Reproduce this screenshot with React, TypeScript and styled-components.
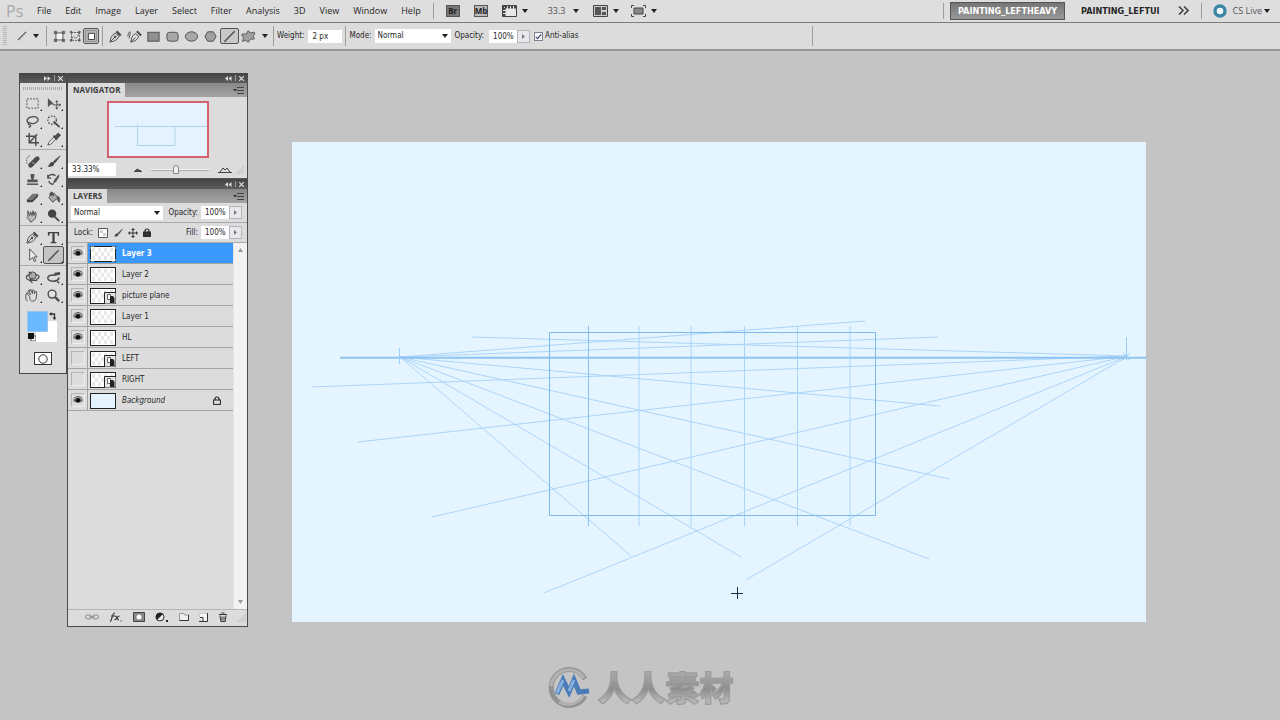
import React, { useState } from 'react';
import styled, { createGlobalStyle, css } from 'styled-components';

const ui = '"DejaVu Sans Condensed", "DejaVu Sans", "Noto Sans", sans-serif';
const menuFont = '"Open Sans", "Noto Sans", sans-serif';

const GlobalStyle = createGlobalStyle`
  *, *::before, *::after { box-sizing: border-box; }
  body { margin: 0; background: #c4c4c4; color: #262626; font: 8px/12px ${ui}; }
  button, input, select { font: inherit; color: inherit; margin: 0; }
  button { background: none; border: 0; padding: 0; cursor: default; }
  svg { display: block; flex: none; }
`;

const Page = styled.div`
  display: flex;
  flex-direction: column;
  min-height: 100vh;
`;

/* ---------- shared controls ---------- */

const Divider = styled.span<{ $h?: number; $before?: number; $after?: number }>`
  flex: none;
  width: 1px;
  height: ${p => p.$h ?? 20}px;
  margin: 0 ${p => p.$after ?? 0}px 0 ${p => p.$before ?? 0}px;
  background: #9c9c9c;
`;

const Caret = ({ w = 6, c = '#222' }: { w?: number; c?: string }) => (
  <svg width={w} height="4" viewBox="0 0 6 4" aria-hidden="true"><path d="M0 0h6L3 4z" fill={c} /></svg>
);

const Field = styled.input<{ $w: number }>`
  width: ${p => p.$w}px;
  height: 13px;
  padding: 0 0 0 4px;
  border: 0;
  outline: 0;
  background: #fff;
  line-height: 13px;
`;

const SelectBox = styled.span<{ $w: number }>`
  display: grid;
  grid-template-columns: 1fr 12px;
  align-items: center;
  width: ${p => p.$w}px;
  height: 14px;
  background: #fff;
  select {
    grid-area: 1 / 1 / 2 / 3;
    width: 100%;
    height: 14px;
    padding: 0 0 0 3px;
    border: 0;
    appearance: none;
    background: none;
  }
  svg { grid-area: 1 / 2; justify-self: center; pointer-events: none; }
`;

const Flyout = styled.button`
  display: grid;
  place-items: center;
  width: 13px;
  height: 13px;
  border: 1px solid #b4b4bc;
  background: #e8e8ec;
`;

const FlyoutArrow = () => (
  <svg width="3" height="5" viewBox="0 0 3 5" aria-hidden="true"><path d="M0 0l3 2.5L0 5z" fill="#778" /></svg>
);

const Percent = ({ label, id }: { label: string; id: string }) => (
  <>
    <label htmlFor={id}>{label}</label>
    <Group>
      <Field id={id} $w={28} defaultValue="100%" />
      <Flyout aria-label={`${label} slider`}><FlyoutArrow /></Flyout>
    </Group>
  </>
);

const Group = styled.div<{ $gap?: number; $ml?: number }>`
  display: flex;
  align-items: center;
  gap: ${p => p.$gap ?? 0}px;
  margin-left: ${p => p.$ml ?? 0}px;
`;

/* ---------- icons ---------- */

const art: Record<string, React.ReactNode> = {
  marquee: <rect x="2" y="3" width="12" height="10" fill="none" strokeDasharray="2 1.4" />,
  move: <><path d="M2 2v10l3-3h4z" fill="#555" stroke="none" /><path d="M11.500 5.500v8M7.500 9.500h8M10.300 6.500l1.200-1.500 1.200 1.500M10.300 12.500l1.200 1.500 1.200-1.500M14 8.300l1.500 1.200L14 10.700" /></>,
  lasso: <path d="M4.500 10C1 8.500 1.500 4 7 3s8 2 6.500 4.500S8 11 5 9.500c-2-1-2 2 0 2s1 2-1 3" fill="none" strokeWidth="1.400" />,
  wand: <><circle cx="6.500" cy="6.500" r="4.500" fill="none" strokeDasharray="1.600 1.600" strokeWidth="1.500" /><path d="M8 8l6.500 6" strokeWidth="2" /></>,
  crop: <path d="M4.500 1v10.500H15M1 4.500h10.500V15M4.500 11.500l8.500-9" fill="none" strokeWidth="1.500" />,
  dropper: <><path d="M2 14l1-3 5.500-5.500 2 2L5 13z" fill="#eee" /><path d="M8 4l4 4M9.500 5.500L13 2l1.500 1.500-3.500 3.500z" strokeWidth="2" /></>,
  heal: <><path d="M5 2C1 3 1 9 3 11" fill="none" strokeDasharray="1.500 1.200" /><path d="M6 12l7-7" strokeWidth="5" strokeLinecap="round" /><path d="M8 8.500l2 2" stroke="#ccc" strokeWidth="1" /></>,
  brush: <><path d="M15 2L8 8l1.500 1.500z" fill="#555" /><path d="M1.500 13c2 0 2-4 5-4.500 2-.300 3 1.500 2 3-1.500 2.300-5 2.500-7 1.500z" fill="#444" stroke="none" /></>,
  stamp: <><path d="M6 2h4v3L9 8h4.500v3h-11V8H7L6 5z" fill="#555" stroke="none" /><path d="M2 13h12" strokeWidth="1.500" /></>,
  history: <><path d="M14 2L9 8l-2 5 4-3 3-5z" fill="#555" stroke="none" /><path d="M2 6c1-4 6-4 8-2M2 3v3.500h3.500M3 9.500c1 3 2 3.500 5 3.500" fill="none" strokeWidth="1.500" /></>,
  eraser: <><path d="M2 10l6-6h6l-6 6z" fill="#777" stroke="none" /><path d="M2 10h6l6-6v3l-6 6H2z" fill="#444" stroke="none" /></>,
  bucket: <><path d="M3 8l5-5 5 5-6 5z" fill="#aaa" /><path d="M4 6c0-5 4-5 4 0M12 7c3 0 3 4 2 6-1.500-1-1.500-3-2-6z" fill="#555" /></>,
  smudge: <path d="M3 3l2 5 1-4 1.500 4 1-5 1 5 1.500-4 1 3-1 4-3 3-2 1-2-3-2-2 1-1z" fill="#bbb" />,
  dodge: <><circle cx="6.500" cy="6" r="4.500" fill="#444" stroke="none" /><path d="M9 9l5 5" strokeWidth="2" /></>,
  pen: <><path d="M2 14C3 9 4 6 8 4.500L11.500 8C10 12 7 13 2 14z" fill="#ddd" /><path d="M9 2.500l4.500 4.500" strokeWidth="2.500" /><path d="M2.500 13.500L7 9" /><circle cx="7.500" cy="8.500" r="1" fill="#444" /></>,
  type: <path d="M2 2h12v4h-1.500L12 3.500H9.200v9l2 .500v1H4.800v-1l2-.500v-9H4L3.500 6H2z" fill="#444" stroke="none" />,
  path: <path d="M5 1v12l3-3 2 4.500 1.600-.800L9.700 9.500H13z" fill="#eee" />,
  line: <path d="M2.500 13.500l11-11" strokeWidth="1.500" />,
  rotate3d: <><circle cx="8" cy="6" r="4" fill="#aaa" /><path d="M5 5C-1 6 1 11 7 11h6M11 5c5 0 5 4 1 5M8 8.500L5 11l3 3M4 2l3 2" fill="none" strokeWidth="1.300" /></>,
  orbit3d: <><path d="M14 8c-1 5-11 5-12 1s7-4 9-4M12 12l2 2" fill="none" strokeWidth="1.600" /><path d="M9 3l6-1v3L9 6z" stroke="none" /></>,
  hand: <><path d="M5 9L3 7c-1-1 0-2 1-1l2 1-2-4c0-1 1-1.500 2-.500L8 6V3c0-1 1.500-1 2 0v3l1-2c1-1 2 0 1.500 1L12 10c0 3-2 4-4 4s-3-1-3-5z" fill="#ddd" /><path d="M1 11c-1-5 2-9 7-9M3 14c-2-1-2-2-2-3" fill="none" /></>,
  zoom: <><circle cx="6.500" cy="6.500" r="4.200" fill="#e4e4e4" strokeWidth="1.500" /><path d="M9.700 9.700L14 14" strokeWidth="2.400" /></>,
  shapeLayers: <><rect x="4.500" y="4.500" width="8" height="8" fill="#f4f4f4" /><path d="M2.500 2.500h3v3h-3zM11.500 2.500h3v3h-3zM2.500 11.500h3v3h-3zM11.500 11.500h3v3h-3z" fill="#666" strokeWidth=".500" /></>,
  paths: <><path d="M4 4h9v9H4zM4 13c1-5 3-5 4-3s2 0 5-6" fill="none" strokeDasharray="2 1" /><path d="M2.500 2.500h2v2h-2zM12 2.500h2v2h-2zM2.500 12h2v2h-2zM12 12h2v2h-2z" fill="#666" strokeWidth=".500" /></>,
  fillPixels: <><path d="M1.500 1.500h13v13h-13z" fill="#b4b4b4" stroke="#888" /><path d="M5 5h7v7H5z" fill="#fff" stroke="#333" /></>,
  freePen: <><path d="M4 14C5 9 6 6 9 5l3.500 3C11 12 8 13 4 14z" fill="#ddd" /><path d="M10.500 2.500L15 7" strokeWidth="2.200" /><path d="M4.500 13.500L9 9M1 8c0-3 1-4 2-5s0 5-1 7" fill="none" /></>,
  rect: <rect x="2" y="3.500" width="12" height="9.500" fill="#909090" />,
  rrect: <rect x="2" y="3.500" width="12" height="9.500" rx="3" fill="#a8a8a8" />,
  ellipse: <ellipse cx="8" cy="8" rx="6.500" ry="5" fill="#a8a8a8" />,
  polygon: <path d="M5 3h6l3 5-3 5H5L2 8z" fill="#a0a0a0" />,
  custom: <path d="M7 2.500c1-1 2 0 2.500 1.500 1 .5 2-.5 4-.5s1 2.500-.5 4c0 1.500 2 2 1 3s-2.500 0-4 .5-1 3-2.500 3-1.500-2-2.500-2-3 2-3.500 1 1.500-2.500 1-4-2-1.500-1.500-3S3.500 5.500 5 5.500 6 3.500 7 2.500z" fill="#a0a0a0" />,
};

const Icon = ({ name, size = 16 }: { name: string; size?: number }) => (
  <svg width={size} height={size} viewBox="0 0 16 16" stroke="#4c4c4c" fill="#4c4c4c" aria-hidden="true">{art[name]}</svg>
);

/* ---------- menu bar ---------- */

const MenuBar = styled.header`
  display: flex;
  align-items: center;
  height: 23px;
  padding: 0 10px 1px 6px;
  border-bottom: 1px solid #7c7c7c;
  background: #dedede;
  font: 9px/14px ${menuFont};
`;

const Logo = styled.span`
  width: 18px;
  margin-right: 13px;
  color: #a8a8a8;
  font: 16px/20px ${menuFont};
`;

const Menu = styled.nav`
  display: flex;
  gap: 14px;
`;

const AppBadge = styled.button<{ $dark?: boolean }>`
  width: 14px;
  height: 12px;
  border: 1px solid #555;
  background: ${p => (p.$dark ? '#777' : '#bbb')};
  color: #222;
  font: 700 8px/10px ${menuFont};
`;

const DropButton = styled.button<{ $gap?: number }>`
  display: flex;
  align-items: center;
  gap: ${p => p.$gap ?? 5}px;
  color: #555;
`;

const Workspaces = styled.div`
  display: flex;
  align-items: center;
  margin-left: auto;
`;

const WorkspaceTab = styled.button<{ $active?: boolean }>`
  height: 18px;
  padding: 0 7px;
  border: 1px solid transparent;
  font: 700 9px/14px ${ui};
  ${p => p.$active && css`
    border-color: #555;
    background: linear-gradient(#767676, #989898);
    color: #fff;
  `}
`;

/* ---------- options bar ---------- */

const OptionsBar = styled.section`
  display: flex;
  align-items: center;
  height: 28px;
  padding: 0 4px 0 3px;
  border-bottom: 2px solid #969696;
  background: #dcdcdc;
`;

const Grip = styled.span`
  width: 4px;
  height: 20px;
  margin-right: 9px;
  background: repeating-linear-gradient(#b8b8b8 0 1px, transparent 1px 2px);
`;

const OptionIcon = styled.button<{ $w: number; $on?: boolean }>`
  display: grid;
  place-items: center;
  width: ${p => p.$w}px;
  height: 16px;
  ${p => p.$on && css`
    border: 1px solid #555;
    border-radius: 2px;
    background: #c8c8c8;
  `}
`;

const Check = styled.input`
  appearance: none;
  display: grid;
  place-items: center;
  width: 9px;
  height: 9px;
  border: 1px solid #7c8490;
  background: #f4f6fa;
  &:checked::after {
    content: '';
    width: 3px;
    height: 6px;
    border: solid #333f66;
    border-width: 0 1px 1px 0;
    transform: rotate(40deg);
  }
`;

/* ---------- panels ---------- */

const Workspace = styled.main`
  display: flex;
  align-items: flex-start;
  padding: 22px 134px 0 19px;
`;

const PanelHead = styled.div`
  display: flex;
  align-items: center;
  justify-content: flex-end;
  gap: 3px;
  height: 10px;
  padding-right: 3px;
  background: linear-gradient(#444, #5c5c5c);
`;

const Head = ({ open }: { open?: boolean }) => (
  <PanelHead>
    <button aria-label="Collapse">
      <svg width="7" height="5" viewBox="0 0 7 5" fill="#ddd">
        <path d={open ? 'M0 0l3 2.500L0 5zM3.500 0l3 2.500-3 2.500z' : 'M3 0L0 2.500 3 5zM6.500 0l-3 2.500 3 2.500z'} />
      </svg>
    </button>
    <Divider $h={6} />
    <button aria-label="Close">
      <svg width="5" height="5" viewBox="0 0 5 5" stroke="#ddd" strokeWidth="1.200"><path d="M0 0l5 5M5 0L0 5" /></svg>
    </button>
  </PanelHead>
);

const ToolPanel = styled.aside`
  flex: none;
  width: 48px;
  border: 1px solid #4a4a4a;
  border-top: 0;
  background: #dcdcdc;
`;

const ToolGrip = styled.div`
  height: 3px;
  margin: 4px 3px;
  background: repeating-linear-gradient(90deg, #aaa 0 1px, transparent 1px 2px);
`;

const ToolGroup = styled.div<{ $last?: boolean }>`
  display: grid;
  grid-template-columns: 21px 21px;
  justify-content: center;
  padding-bottom: 1px;
  margin-bottom: 2px;
  border-bottom: 1px solid ${p => (p.$last ? 'transparent' : '#aaa')};
`;

const Tool = styled.button<{ $on?: boolean }>`
  position: relative;
  display: grid;
  place-items: center;
  height: 18px;
  border: 1px solid ${p => (p.$on ? '#555' : 'transparent')};
  border-radius: 2px;
  background: ${p => (p.$on ? '#c4c4c4' : 'none')};
  &::after {
    content: '';
    position: absolute;
    right: 0;
    bottom: 0;
    border: 1px solid #222;
    border-top-color: transparent;
    border-left-color: transparent;
  }
`;

const Swatches = styled.div`
  display: grid;
  grid-template-columns: 9px 12px 9px;
  grid-template-rows: 10px 11px 10px;
  width: 30px;
  margin: 5px 0 10px 7px;
`;

const Swatch = styled.button<{ $fore?: boolean }>`
  grid-area: ${p => (p.$fore ? '1 / 1 / 3 / 3' : '2 / 2 / 4 / 4')};
  z-index: ${p => (p.$fore ? 1 : 0)};
  border: ${p => (p.$fore ? '1px solid #9cc4e8' : '0')};
  background: ${p => (p.$fore ? '#6bb9ff' : '#fff')};
`;

const SwatchIcon = styled.button<{ $area: string }>`
  grid-area: ${p => p.$area};
  place-self: center;
`;

const MaskButton = styled.button`
  display: grid;
  place-items: center;
  width: 18px;
  height: 13px;
  margin: 0 auto 8px;
  border: 1px solid #333;
  background: #fff;
`;

const Dock = styled.aside`
  flex: none;
  width: 181px;
  margin-right: 44px;
  border: 1px solid #4a4a4a;
  border-top: 0;
  background: #dcdcdc;
`;

const TabRow = styled.div`
  display: flex;
  align-items: center;
  justify-content: space-between;
  height: 14px;
  padding-right: 3px;
  background: linear-gradient(#888, #a4a4a4);
`;

const Tab = styled.h2`
  height: 14px;
  margin: 0;
  padding: 0 5px;
  background: #dcdcdc;
  color: #3c3c3c;
  font: 700 8px/14px ${menuFont};
`;

const PanelMenu = () => (
  <button aria-label="Panel menu">
    <svg width="11" height="7" viewBox="0 0 11 7"><path d="M0 2h4L2 4.500z" fill="#333" /><path d="M4 .5h7M4 3.500h7M4 6.500h7" stroke="#444" /></svg>
  </button>
);

const Preview = styled.div`
  width: 102px;
  margin: 4px auto 5px 39px;
  border: 2px solid #d4626e;
  background: #e4f3ff;
`;

const NavFoot = styled.div`
  display: flex;
  align-items: center;
  gap: 3px;
  height: 16px;
  padding-bottom: 2px;
  border-bottom: 1px solid #555;
`;

const ZoomTrack = styled.input`
  appearance: none;
  width: 58px;
  height: 9px;
  margin: 0 6px 0 6px;
  background: linear-gradient(transparent 4px, #f6f6f6 4px 5px, #aaa 5px 6px, transparent 6px);
  &::-webkit-slider-thumb {
    appearance: none;
    width: 6px;
    height: 9px;
    border: 1px solid #888;
    border-radius: 3px 3px 0 0;
    background: #f0f0f0;
  }
`;

const ControlRow = styled.div<{ $h: number }>`
  display: flex;
  align-items: center;
  justify-content: space-between;
  height: ${p => p.$h}px;
  padding: 0 5px 0 3px;
  border-bottom: 1px solid #aaa;
`;

const ListArea = styled.div`
  display: flex;
  height: 366px;
`;

const LayerList = styled.ul`
  flex: 1;
  margin: 0;
  padding: 0;
  list-style: none;
`;

const LayerRow = styled.li`
  display: flex;
  align-items: center;
  height: 21px;
  border-bottom: 1px solid #a4a4a4;
`;

const EyeBox = styled.button`
  display: grid;
  place-items: center;
  width: 14px;
  height: 14px;
  margin: 0 2px 0 3px;
  border: 1px solid #b4b4b4;
  border-right-color: #eee;
  border-bottom-color: #eee;
`;

const LayerBody = styled.button<{ $on?: boolean; $italic?: boolean }>`
  display: flex;
  flex: 1;
  align-items: center;
  gap: 6px;
  height: 20px;
  padding: 1px 12px 0 2px;
  border-left: 1px solid #a4a4a4;
  text-align: left;
  ${p => p.$on && css`background: #3b99fc; color: #fff; font-weight: 700;`}
  ${p => p.$italic && css`font-style: italic;`}
  span { flex: 1; padding-top: 1px; }
`;

const Scrollbar = styled.div`
  display: flex;
  flex-direction: column;
  align-items: center;
  justify-content: space-between;
  width: 14px;
  padding: 5px 0;
  border-left: 1px solid #e4e4e4;
  background: #f2f2f2;
`;

const DockFoot = styled.div`
  display: flex;
  align-items: center;
  justify-content: space-between;
  height: 17px;
  padding: 0 1px 2px 17px;
  border-top: 1px solid #b4b4b4;
`;

/* ---------- document ---------- */

const Document = styled.section`
  flex: 1;
  min-width: 0;
  margin-top: 69px;
  background: #e5f5ff;
  svg { width: 100%; height: auto; }
`;

const Footer = styled.footer`
  display: flex;
  align-items: center;
  justify-content: center;
  gap: 8px;
  padding: 38px 0 9px;
`;

const Brand = styled.span`
  background: linear-gradient(#a8a8a8 20%, #8e8e8e 55%, #b4b4b4 80%);
  background-clip: text;
  color: transparent;
  -webkit-text-stroke: 1px #9c9c9c;
  font: 900 34px/44px "Noto Sans CJK SC", sans-serif;
`;

/* ---------- data ---------- */

const menus = ['File', 'Edit', 'Image', 'Layer', 'Select', 'Filter', 'Analysis', '3D', 'View', 'Window', 'Help'];

const toolGroups = [
  ['marquee', 'move', 'lasso', 'wand', 'crop', 'dropper'],
  ['heal', 'brush', 'stamp', 'history', 'eraser', 'bucket', 'smudge', 'dodge'],
  ['pen', 'type', 'path', 'line'],
  ['rotate3d', 'orbit3d', 'hand', 'zoom'],
];

const layers = [
  { name: 'Layer 3', visible: true },
  { name: 'Layer 2', visible: true },
  { name: 'picture plane', visible: true, smart: true },
  { name: 'Layer 1', visible: true },
  { name: 'HL', visible: true },
  { name: 'LEFT', visible: false, smart: true },
  { name: 'RIGHT', visible: false, smart: true },
  { name: 'Background', visible: true, locked: true },
];

const leftRays = [[865, 321], [938, 337], [940, 406], [949, 479], [929, 559], [741, 557], [631, 556]];
const rightRays = [[472, 337], [312, 387], [358, 442], [432, 517], [544, 593], [746, 580]];
const posts = [588.5, 639, 691, 744.5, 797.5, 850];

const LockIcon = ({ open }: { open?: boolean }) => (
  <svg width="8" height="9" viewBox="0 0 8 9" aria-hidden="true">
    <path d="M2 4.500V3a2 2 0 0 1 4 0v1.500" fill="none" stroke="#222" strokeWidth="1.200" />
    <rect x=".6" y="4" width="6.800" height="4.400" fill={open ? '#ddd' : '#333'} stroke="#222" />
  </svg>
);

const Eye = () => (
  <svg width="10" height="8" viewBox="0 0 10 8" aria-hidden="true">
    <path d="M0 4.500C2 1 8 1 10 4.500 8 7.500 2 7.500 0 4.500z" fill="#777" /><circle cx="5" cy="4.200" r="2.300" fill="#111" /><path d="M.5 3C3 0 7 0 9.500 3" fill="none" stroke="#333" />
  </svg>
);

const Thumb = ({ plain, smart, on }: { plain?: boolean; smart?: boolean; on?: boolean }) => (
  <svg width="26" height="16" viewBox="0 0 26 16" aria-hidden="true">
    <rect x=".5" y=".5" width="25" height="15" fill={plain ? '#e4f3ff' : '#fff'} stroke="#222" />
    {!plain && [0, 1, 2].map(r => [0, 1, 2, 3].filter(c => r !== 1 || c < 3).map(c => (
      <rect key={`${r}${c}`} x={2 + c * 6 + (r % 2) * 3} y={2 + r * 4} width="3" height="4" fill="#e8e8e8" />
    )))}
    {on && <path d="M1 3V1h3M22 1h3v2M25 13v2h-3M4 15H1v-2" fill="none" stroke="#fff" />}
    {smart && <><path d="M14.500 4.500H26V16H14.500z" fill="#e4e4e4" stroke="#222" /><path d="M17.500 6.500h3v5h-3z" fill="#fff" stroke="#666" /><path d="M20 8h3l1.500 2v5H20z" fill="#222" /></>}
  </svg>
);

const DocumentArt = () => (
  <svg viewBox="292 142 854 480" role="img" aria-label="Two-point perspective construction" fill="none" stroke="#acd4f9">
    {leftRays.map(([x, y]) => <path key={x} d={`M400 357L${x} ${y}`} />)}
    {rightRays.map(([x, y]) => <path key={x} d={`M1128 356L${x} ${y}`} />)}
    {posts.map((x, i) => <path key={x} d={`M${x} 326V526`} stroke={i === 0 ? '#86bff2' : '#a9d4fa'} />)}
    <path d="M340 357.800H1146" stroke="#8fc4f2" strokeWidth="2" />
    <path d="M549.500 332.500H875.500V515.500H549.500z" stroke="#7db8ea" />
    <path d="M399.500 348V364M1126.500 337V360M1123 353l7 7M1130 353l-7 7" stroke="#9accf8" />
    <path d="M731 593.500h12M737.500 587v12" stroke="#1c2a44" />
  </svg>
);

export default function App() {
  const [active, setActive] = useState('Layer 3');
  return (
    <Page>
      <GlobalStyle />
      <MenuBar>
        <Logo>Ps</Logo>
        <Menu>{menus.map(m => <button key={m}>{m}</button>)}</Menu>
        <Divider $h={16} $before={12} $after={12} />
        <AppBadge $dark>Br</AppBadge>
        <Group $ml={14}><AppBadge>Mb</AppBadge></Group>
        <Group $ml={14} $gap={20}>
          <DropButton aria-label="View extras">
            <svg width="15" height="12" viewBox="0 0 15 12"><path d="M.5.5h14v11H.5z" fill="#e8e8e8" stroke="#444" /><path d="M0 2h15M2 0v12" stroke="#444" strokeWidth="3" strokeDasharray="2 1" /></svg>
            <Caret />
          </DropButton>
          <DropButton $gap={8}>33.3 <Caret /></DropButton>
        </Group>
        <Group $ml={14} $gap={12}>
          <DropButton aria-label="Arrange documents">
            <svg width="15" height="12" viewBox="0 0 15 12"><path d="M.5.5h14v11H.5z" fill="#ccc" stroke="#444" /><path d="M2 2h6v8H2zM9 2h4v3H9zM9 7h4v3H9z" fill="#555" /></svg>
            <Caret />
          </DropButton>
          <DropButton aria-label="Screen mode">
            <svg width="15" height="12" viewBox="0 0 15 12"><path d="M3 3h9v6H3z" fill="#888" stroke="#444" /><path d="M.5 3V.5H3M12 .5h2.500V3M14.500 9v2.500H12M3 11.500H.5V9" fill="none" stroke="#444" /></svg>
            <Caret />
          </DropButton>
        </Group>
        <Workspaces>
          <Divider $h={16} $after={6} />
          <WorkspaceTab $active>PAINTING_LEFTHEAVY</WorkspaceTab>
          <Group $ml={8}><WorkspaceTab>PAINTING_LEFTUI</WorkspaceTab></Group>
          <Group $ml={10}>
            <button aria-label="More workspaces">
              <svg width="11" height="9" viewBox="0 0 11 9" fill="none" stroke="#444" strokeWidth="1.600"><path d="M1 .5l4 4-4 4M6 .5l4 4-4 4" /></svg>
            </button>
          </Group>
          <Divider $h={16} $before={12} $after={11} />
          <DropButton $gap={2}>
            <svg width="14" height="14" viewBox="0 0 14 14"><circle cx="7" cy="7" r="5" fill="#eef6fa" stroke="#3b86a4" strokeWidth="3.400" /></svg>
            <Group $ml={4}>CS Live</Group>
            <Caret />
          </DropButton>
        </Workspaces>
      </MenuBar>

      <OptionsBar>
        <Grip />
        <Icon name="line" size={12} />
        <Group $ml={5}><Caret /></Group>
        <Divider $before={7} $after={4} />
        <OptionIcon $w={16} aria-label="Shape layers"><Icon name="shapeLayers" size={14} /></OptionIcon>
        <OptionIcon $w={16} aria-label="Paths"><Icon name="paths" size={14} /></OptionIcon>
        <OptionIcon $w={16} $on aria-label="Fill pixels"><Icon name="fillPixels" size={14} /></OptionIcon>
        <Divider $before={3} $after={3} />
        {['pen', 'freePen', 'rect', 'rrect', 'ellipse', 'polygon', 'line', 'custom'].map(n => (
          <OptionIcon key={n} $w={19} $on={n === 'line'} aria-label={n}><Icon name={n} size={15} /></OptionIcon>
        ))}
        <Group $ml={4}><Caret /></Group>
        <Divider $before={5} $after={3} />
        <Group $gap={4}>
          <label htmlFor="weight">Weight:</label>
          <Field id="weight" $w={34} defaultValue="2 px" />
        </Group>
        <Divider $before={3} $after={3} />
        <Group $gap={3}>
          <label htmlFor="mode">Mode:</label>
          <SelectBox $w={76}><select id="mode"><option>Normal</option></select><Caret /></SelectBox>
        </Group>
        <Group $ml={4} $gap={5}><Percent label="Opacity:" id="opacity" /></Group>
        <Group $ml={4} $gap={2}>
          <Check type="checkbox" id="aa" defaultChecked />
          <label htmlFor="aa">Anti-alias</label>
        </Group>
        <Divider $before={233} />
      </OptionsBar>

      <Workspace>
        <ToolPanel>
          <Head open />
          <ToolGrip />
          {toolGroups.map((g, i) => (
            <ToolGroup key={g[0]} $last={i === toolGroups.length - 1}>
              {g.map(t => <Tool key={t} $on={t === 'line'} aria-label={t}><Icon name={t} size={15} /></Tool>)}
            </ToolGroup>
          ))}
          <Swatches>
            <Swatch $fore aria-label="Foreground color" />
            <Swatch aria-label="Background color" />
            <SwatchIcon $area="1 / 3" aria-label="Swap colors">
              <svg width="8" height="8" viewBox="0 0 8 8"><path d="M1 2h4.500v5" fill="none" stroke="#333" strokeWidth="1.300" /><path d="M2.500 0v4L0 2zM3.500 5.500h4l-2 2.500z" fill="#333" /></svg>
            </SwatchIcon>
            <SwatchIcon $area="3 / 1" aria-label="Default colors">
              <svg width="8" height="8" viewBox="0 0 8 8"><path d="M3 3h5v5H3z" fill="#fff" stroke="#555" /><path d="M0 0h6v6H0z" fill="#111" /></svg>
            </SwatchIcon>
          </Swatches>
          <MaskButton aria-label="Quick mask">
            <svg width="10" height="10" viewBox="0 0 10 10"><circle cx="5" cy="5" r="4.200" fill="none" stroke="#333" /></svg>
          </MaskButton>
        </ToolPanel>

        <Dock>
          <Head />
          <TabRow><Tab>NAVIGATOR</Tab><PanelMenu /></TabRow>
          <Preview>
            <svg width="98" height="53" viewBox="0 0 98 53" fill="none" stroke="#b4d2e8">
              <path d="M6 23.500h92M28.500 21v21.500h37.500V23" />
            </svg>
          </Preview>
          <NavFoot>
            <Field $w={48} aria-label="Zoom level" defaultValue="33.33%" />
            <Group $ml={15}><svg width="8" height="5" viewBox="0 0 8 5"><path d="M0 4.500h8M1 4l2-2 2 1 2 1z" stroke="#444" fill="#666" /></svg></Group>
            <ZoomTrack type="range" defaultValue="42" aria-label="Zoom" />
            <svg width="14" height="7" viewBox="0 0 14 7"><path d="M0 6.500h14M2 6l3-4 2 2 2-2 3 4" stroke="#444" fill="none" /></svg>
            <svg width="9" height="9" viewBox="0 0 9 9" stroke="#aaa" strokeDasharray="2 1"><path d="M1 9l8-8M4 9l5-5M7 9l2-2" /></svg>
          </NavFoot>

          <Head />
          <TabRow><Tab>LAYERS</Tab><PanelMenu /></TabRow>
          <ControlRow $h={20}>
            <SelectBox $w={92}><select aria-label="Blend mode"><option>Normal</option></select><Caret /></SelectBox>
            <Group $gap={3}><Percent label="Opacity:" id="layer-opacity" /></Group>
          </ControlRow>
          <ControlRow $h={20}>
            <Group $gap={5} $ml={3}>
              <span>Lock:</span>
              <svg width="10" height="10" viewBox="0 0 10 10"><path d="M.5.5h9v9h-9z" fill="#fff" stroke="#555" /><path d="M2 2h3v3H2zM5 5h3v3H5z" fill="#ccc" /></svg>
              <Icon name="brush" size={10} />
              <svg width="10" height="10" viewBox="0 0 10 10"><path d="M5 1v8M1 5h8" stroke="#333" /><path d="M5 0l2 2H3zM5 10L3 8h4zM0 5l2-2v4zM10 5L8 3v4z" fill="#333" /></svg>
              <LockIcon />
            </Group>
            <Group $gap={3}><Percent label="Fill:" id="fill" /></Group>
          </ControlRow>
          <ListArea>
            <LayerList>
              {layers.map(l => (
                <LayerRow key={l.name}>
                  <EyeBox aria-label={`Visibility of ${l.name}`} aria-pressed={l.visible}>{l.visible && <Eye />}</EyeBox>
                  <LayerBody $on={active === l.name} $italic={l.locked} onClick={() => setActive(l.name)}>
                    <Thumb plain={l.locked} smart={l.smart} on={active === l.name} />
                    <span>{l.name}</span>
                    {l.locked && <LockIcon open />}
                  </LayerBody>
                </LayerRow>
              ))}
            </LayerList>
            <Scrollbar>
              <svg width="5" height="4" viewBox="0 0 5 4"><path d="M0 4h5L2.500 0z" fill="#999" /></svg>
              <svg width="5" height="4" viewBox="0 0 5 4"><path d="M0 0h5L2.500 4z" fill="#999" /></svg>
            </Scrollbar>
          </ListArea>
          <DockFoot>
            <button aria-label="Link layers"><svg width="14" height="6" viewBox="0 0 14 6" fill="none" stroke="#888"><rect x=".5" y="1" width="6" height="4" rx="2" /><rect x="7.500" y="1" width="6" height="4" rx="2" /><path d="M4 3h6" /></svg></button>
            <button aria-label="Layer style"><svg width="13" height="10" viewBox="0 0 13 10" fill="none" stroke="#333" strokeWidth="1.200"><path d="M1 9.500c2 0 2-9 5-8.500M2 4h4M6 4c2 0 2 4 4 4M10.500 4C8 4 7.500 8 5.500 8M12 8.500v1" /></svg></button>
            <button aria-label="Add mask"><svg width="12" height="10" viewBox="0 0 12 10"><path d="M.5.5h11v9H.5z" fill="#888" stroke="#444" /><circle cx="6" cy="5" r="2.500" fill="#fff" /></svg></button>
            <button aria-label="Adjustment layer"><svg width="13" height="10" viewBox="0 0 13 10"><circle cx="5" cy="5" r="4" fill="#eee" stroke="#333" /><path d="M2 8A4 4 0 0 1 8 2z" fill="#222" /><path d="M11 8h2v2h-2z" fill="#222" /></svg></button>
            <button aria-label="New group"><svg width="10" height="8" viewBox="0 0 10 8"><path d="M.5 7.500v-7h4l1 1.500h4v5.500z" fill="#eee" stroke="#999" /><path d="M.5 7.500h9V2" stroke="#333" fill="none" /></svg></button>
            <button aria-label="New layer"><svg width="9" height="9" viewBox="0 0 9 9"><path d="M.5.5h8v8h-5l-3-3z" fill="#f4f4f4" stroke="#ccc" /><path d="M0 8.500h8.500V0M4 8V4.500H1" stroke="#333" fill="none" /></svg></button>
            <button aria-label="Delete layer"><svg width="8" height="10" viewBox="0 0 8 10" fill="none" stroke="#333"><path d="M1 3.500l.8 6h4.400l.8-6M0 2.500h8M2.500 1h3M3 4.500v4M5 4.500v4" /></svg></button>
            <svg width="9" height="9" viewBox="0 0 9 9" stroke="#aaa" strokeDasharray="2 1"><path d="M1 9l8-8M4 9l5-5M7 9l2-2" /></svg>
          </DockFoot>
        </Dock>

        <Document><DocumentArt /></Document>
      </Workspace>

      <Footer>
        <svg width="43" height="44" viewBox="0 0 43 44" fill="none" aria-hidden="true">
          <path d="M38 14A18 18 0 1 0 38 31" stroke="#929292" strokeWidth="5" />
          <path d="M37 13A18 18 0 0 0 4 21M12 37A18 18 0 0 0 36 31" stroke="#b2b2b2" strokeWidth="3" />
          <path d="M10 29l6-14 6 12 5-12 5 12 10-1" stroke="#4c7cb8" strokeWidth="5" />
          <path d="M10 28l6-13M22 26l5-11" stroke="#86b0dc" strokeWidth="3" />
        </svg>
        <Brand>人人素材</Brand>
      </Footer>
    </Page>
  );
}
